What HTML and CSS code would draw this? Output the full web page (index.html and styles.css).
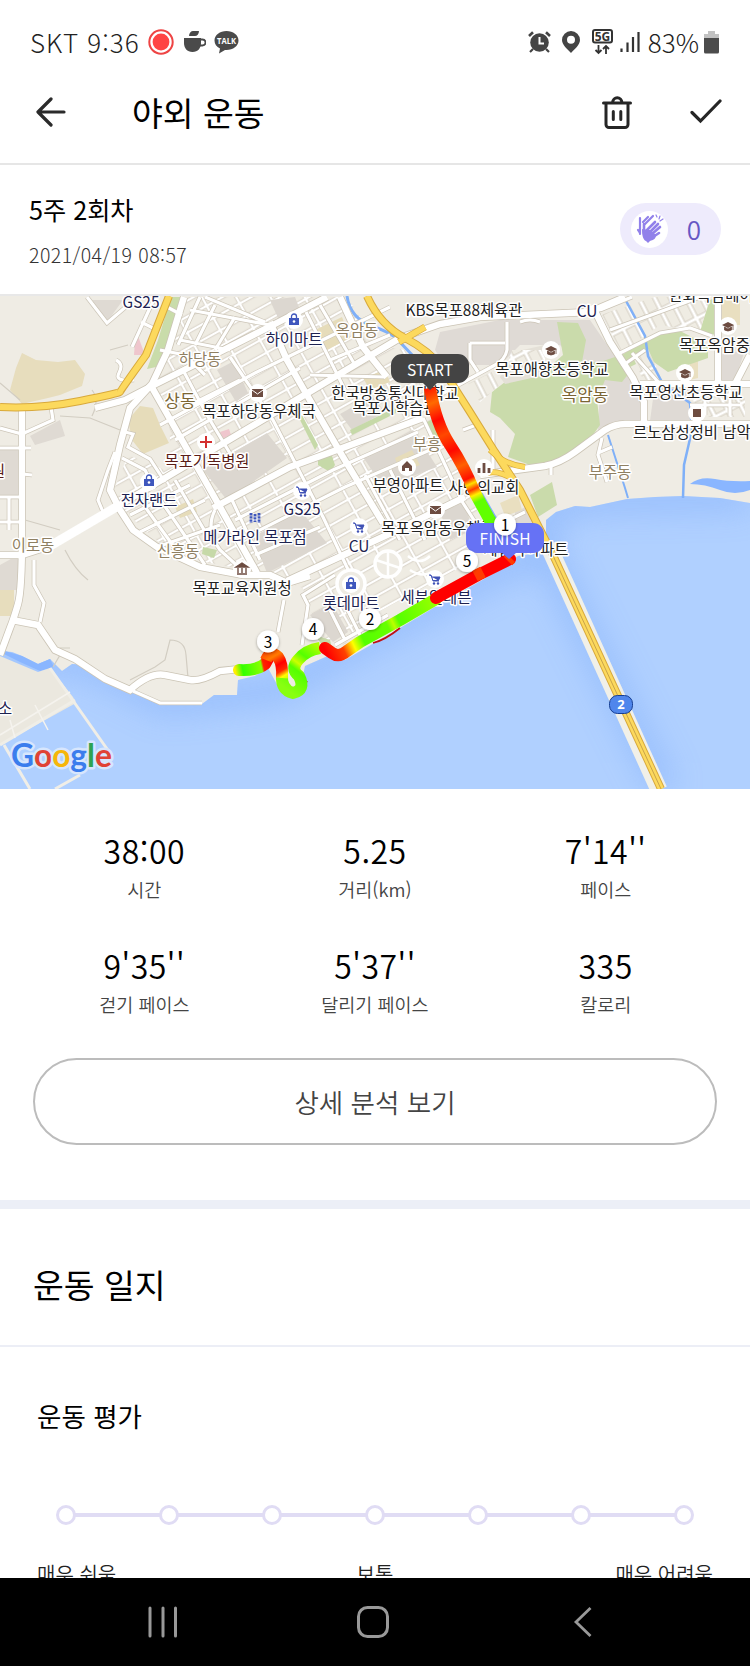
FILE: index.html
```html
<!DOCTYPE html>
<html lang="ko">
<head>
    <meta charset="UTF-8">
    <meta name="viewport" content="width=device-width, initial-scale=1.0">
    <title>야외 운동</title>
    <link rel="stylesheet" href="styles.css">
</head>
<body>
    <div class="status-bar">
        <div class="status-left">
            <span class="status-text carrier">SKT 9:36</span>
            <svg class="icon-record" width="26" height="26" viewBox="0 0 26 26">
                <circle cx="13" cy="13" r="11.7" fill="none" stroke="#ee4444" stroke-width="2"/>
                <circle cx="13" cy="13" r="8.4" fill="#ff4444"/>
            </svg>
            <svg class="icon-cup" width="22" height="22" viewBox="0 0 22 22">
                <path d="M5 5c0-3 2-5 4-5h6c0 3-2 5-4 5z" fill="#4a4a4a"/>
                <path d="M0 7h17v5c0 5-3 9-8.500 9S0 17 0 12z" fill="#4a4a4a"/>
                <path d="M16 8.500h2.500a2.200 2.200 0 0 1 0 6H16" fill="none" stroke="#4a4a4a" stroke-width="1.800"/>
            </svg>
            <svg class="icon-talk" width="25" height="24" viewBox="0 0 25 24">
                <path d="M12.500 1C19 1 24.500 5 24.500 10.500S19 20 12.500 20L11 19.900 5 23.500 6 18.500C2.500 17 .5 14 .5 10.500.5 5 6 1 12.500 1z" fill="#4a4a4a"/>
                <text x="12.500" y="13.700" text-anchor="middle" class="talk-text" textLength="19" lengthAdjust="spacingAndGlyphs">TALK</text>
            </svg>
        </div>
        <div class="status-right">
            <svg width="23" height="22" viewBox="0 0 23 22">
                <circle cx="11.500" cy="11.500" r="9.300" fill="#444"/>
                <path d="M1 5l4-3.800M22 5l-4-3.800" stroke="#444" stroke-width="2.600"/>
                <path d="M5 18l-3 3M18 18l3 3" stroke="#444" stroke-width="2.200"/>
                <path d="M11.500 6v6.500H16" fill="none" stroke="#fff" stroke-width="2"/>
            </svg>
            <svg class="icon-pin" width="18" height="22" viewBox="0 0 18 22">
                <path d="M9 0a9 9 0 0 1 9 9c0 5-5.500 9-9 13C5.500 18 0 14 0 9a9 9 0 0 1 9-9zm0 4.700a4 4 0 1 0 0 8 4 4 0 0 0 0-8z" fill="#444" fill-rule="evenodd"/>
            </svg>
            <svg class="icon-5g" width="21" height="26" viewBox="0 0 21 26">
                <rect x="1" y="1" width="19" height="12.500" rx="2" fill="#fff" stroke="#333" stroke-width="2"/>
                <text x="10.500" y="12" text-anchor="middle" class="net-text">5G</text>
                <path d="M6.500 16v8M3.500 21l3 3 3-3M14 25v-8M11 20l3-3 3 3" fill="none" stroke="#333" stroke-width="1.800"/>
            </svg>
            <svg class="icon-signal" width="20" height="22" viewBox="0 0 20 22">
                <path d="M1.500 17.500V21M7.500 11.500V21M13 6v15M18.500 1v20" stroke="#333" stroke-width="2.200" fill="none"/>
            </svg>
            <span class="status-text">83%</span>
            <svg class="icon-battery" width="15" height="23" viewBox="0 0 15 23">
                <path d="M4 0h7v3h4v4H0V3h4z" fill="#c2c2c2"/>
                <path d="M0 7h15v14a1.500 1.500 0 0 1-1.500 1.500h-12A1.500 1.500 0 0 1 0 21z" fill="#4c4c4c"/>
            </svg>
        </div>
    </div>

    <header class="header">
        <svg class="btn-back" width="30" height="30" viewBox="0 0 30 30">
            <path d="M15 2L2 15l13 13M2.500 15H28" fill="none" stroke="#2b2b2b" stroke-width="3.200" stroke-linecap="round" stroke-linejoin="round"/>
        </svg>
        <h1>야외 운동</h1>
        <svg class="btn-delete" width="32" height="36" viewBox="0 0 32 36">
            <path d="M2.500 9h27M5 9v21.500a3 3 0 0 0 3 3h16a3 3 0 0 0 3-3V9M11.500 8.500a4.800 5.500 0 0 1 9.500 0" fill="none" stroke="#262626" stroke-width="3" stroke-linecap="round"/>
            <path d="M12.300 17.500v8M19.800 17.500v8" stroke="#262626" stroke-width="3" stroke-linecap="round"/>
        </svg>
        <svg class="btn-done" width="32" height="26" viewBox="0 0 32 26">
            <path d="M2 13.500l8.500 8.500L30 2" fill="none" stroke="#262626" stroke-width="3.200" stroke-linecap="round"/>
        </svg>
    </header>

    <main class="content">
        <section class="summary">
            <div>
                <h2>5주 2회차</h2>
                <p class="date">2021/04/19 08:57</p>
            </div>
            <div class="clap">
                <span class="clap-icon">
                    <svg width="30" height="30" viewBox="0 0 30 30">
                        <g fill="none" stroke="#9181ea" stroke-linecap="round">
                            <path d="M5 20V4M3 16l2 3M8 8l5-5M12 8l5-5M10 10l8-8" stroke-width="2.200"/>
                            <path d="M9 20V10M11 17l9-9M14 19l9-9M17 20l8-7M18 23l6-4" stroke-width="2.600"/>
                            <path d="M21 1l1 2M25 2l-1 3M28 5l-3 2" stroke-width="1.200"/>
                        </g>
                        <path d="M7 15l4 1 4 0 6 5c0 4-3 5-6 6l-2 2-2-2c-3-1-4-6-4-12z" fill="#9181ea"/>
                    </svg>
                </span>
                <span class="clap-count">0</span>
            </div>
        </section>

        <svg class="map" width="750" height="493" viewBox="0 296 750 493">
            <defs>
                <linearGradient id="run1" gradientUnits="userSpaceOnUse" x1="430" y1="388" x2="490" y2="522">
                    <stop offset="0" stop-color="#ff1a00"/><stop offset=".1" stop-color="#ff6a00"/>
                    <stop offset=".22" stop-color="#ff0800"/><stop offset=".33" stop-color="#ff4800"/>
                    <stop offset=".45" stop-color="#ff0800"/><stop offset=".57" stop-color="#ff6000"/>
                    <stop offset=".67" stop-color="#ff1000"/><stop offset=".71" stop-color="#ffe000"/>
                    <stop offset=".75" stop-color="#ff3a00"/><stop offset=".79" stop-color="#fff000"/>
                    <stop offset=".84" stop-color="#60ff00"/><stop offset="1" stop-color="#60ff00"/>
                </linearGradient>
                <linearGradient id="run2" gradientUnits="userSpaceOnUse" x1="325" y1="650" x2="435" y2="598">
                    <stop offset="0" stop-color="#f00"/><stop offset=".14" stop-color="#ff4000"/>
                    <stop offset=".23" stop-color="#ff0"/><stop offset=".32" stop-color="#5f0"/>
                    <stop offset=".55" stop-color="#6f0"/><stop offset=".6" stop-color="#bf0"/>
                    <stop offset=".65" stop-color="#5f0"/><stop offset="1" stop-color="#9f0"/>
                </linearGradient>
                <linearGradient id="run3" gradientUnits="userSpaceOnUse" x1="262" y1="650" x2="285" y2="690">
                    <stop offset="0" stop-color="#f30"/><stop offset=".25" stop-color="#ff7a00"/>
                    <stop offset=".45" stop-color="#f00"/><stop offset=".6" stop-color="#ff2a00"/>
                    <stop offset=".72" stop-color="#ff0"/><stop offset="1" stop-color="#6f0"/>
                </linearGradient>
                <linearGradient id="run4" gradientUnits="userSpaceOnUse" x1="235" y1="670" x2="272" y2="662">
                    <stop offset="0" stop-color="#fe0"/><stop offset=".2" stop-color="#3f0"/>
                    <stop offset=".7" stop-color="#8f0"/><stop offset=".76" stop-color="#f20"/><stop offset="1" stop-color="#f00"/>
                </linearGradient>
                <linearGradient id="run5" gradientUnits="userSpaceOnUse" x1="320" y1="648" x2="288" y2="690">
                    <stop offset="0" stop-color="#af0"/><stop offset=".3" stop-color="#5f0"/>
                    <stop offset=".48" stop-color="#cf0"/><stop offset=".6" stop-color="#5f0"/><stop offset="1" stop-color="#8f1"/>
                </linearGradient>
                <filter id="soft" x="-20%" y="-20%" width="140%" height="140%"><feGaussianBlur stdDeviation="15"/></filter>
                <filter id="shadow" x="-40%" y="-40%" width="180%" height="180%"><feDropShadow dx="0" dy="1" stdDeviation="1.500" flood-opacity=".35"/></filter>
                <!-- small street blocks -->
                <pattern id="blocks" width="30" height="14" patternUnits="userSpaceOnUse" patternTransform="translate(4 2) rotate(-29)">
                    <rect width="30" height="14" fill="#fff"/>
                    <rect x="1.700" y="1.700" width="26.600" height="10.600" fill="#efece3" stroke="#d3ccbf" stroke-width=".8"/>
                </pattern>
                <pattern id="blocks2" width="14" height="24" patternUnits="userSpaceOnUse" patternTransform="rotate(-27)">
                    <rect width="14" height="24" fill="#fff"/>
                    <rect x="2" y="2" width="10" height="20" fill="#efece3" stroke="#cfc8ba" stroke-width=".9"/>
                </pattern>
                <clipPath id="seaClip"><path id="seaShape" d="M0 651L12 652 22 656 38 664 50 659 62 671 72 664 90 665 115 684 140 694 165 703 202 704 214 695 237 695 238 680 255 676 268 668 280 690 300 690 305 666 330 655 345 660 400 628 440 604 500 570 518 556 546 552 546 520 556 512 575 506 590 507 627 499 655 497 683 496 720 498 750 503V790H0z"/></clipPath>
                <g id="major" fill="none">
                    <path d="M22 407V535Q22 590 18 604T10 628L0 655"/>
                    <path d="M0 555H22L50 546 118 506 207 453 400 338 440 324 480 317 590 312 625 297"/>
                    <path d="M95 408L125 400 152 386 190 367 273 325 327 297"/>
                    <path d="M150 384L220 507 257 573"/>
                    <path d="M184 297L168 350 152 384 130 408 120 445 110 490 120 510 133 530 157 547 200 567 243 575H270L287 583 310 576"/>
                    <path d="M270 322L287 360 300 383 343 457 383 523"/>
                    <path d="M340 297L363 347 387 377"/>
                    <path d="M213 508L290 467 345 447 423 418"/>
                    <path d="M287 581L387 535 465 497"/>
                    <path d="M480 475L545 466Q560 463 575 452L605 430Q615 424 625 424H750"/>
                    <path d="M592 305L610 342 633 378 644 402V422M640 384H750M718 384V297M735 384L750 355"/>
                    <path d="M12 620L38 625 55 650 75 659 105 679 130 690Q150 672 165 675T190 680 220 671L240 669"/>
                </g>
                <g id="minor" fill="none">
                    <path d="M87 297L107 323 128 305M155 297L132 347M141 322L157 330M167 307L182 315"/>
                    <path d="M116 360Q124 364 119 373T134 380M51 407L53 420 22 434 0 428M0 448H31M22 474L32 475M0 497H22M9 497V530M0 522H22"/>
                    <path d="M115 452L108 470 98 500 103 512M125 432L133 434 128 447 150 459 165 482M122 458L145 470 150 480"/>
                    <path d="M34 560V585L44 603 40 622M133 691L160 703H202"/>
                    <path d="M230 357L273 420 323 517 353 580M183 370L207 415 240 470M160 350L185 355 205 375"/>
                    <path d="M284 600L278 632M302 645L308 605 303 595 335 575M330 610L345 640M335 645L388 615M345 605L360 635"/>
                    <path d="M240 540L345 487 430 450M235 520L333 470 418 432M255 555L320 527M160 425L255 373 390 307M175 440L300 368M190 405L240 380"/>
                    <path d="M423 418L463 503 490 545M390 470L425 540M365 475L400 540M330 360L390 335M310 375L385 377M306 312L345 390M320 305L355 365"/>
                    <path d="M215 510Q205 530 220 550L245 573M232 500L260 560M140 500L180 555M155 492L205 565M175 480L210 540M130 515L190 485M140 532L205 500M160 546L220 525"/>
                    <path d="M190 310L270 325M205 297L265 322M200 297L178 345M215 305L195 345M235 317L215 350M180 340L230 350"/>
                    <path d="M507 322V350Q505 360 495 365L440 395M470 343H505M470 343V360L478 372"/>
                    <path d="M463 430L479 424M480 475L493 470V430M505 522L525 512"/>
                    <path d="M610 330L665 310 700 297M620 353L660 333 690 328 712 336M600 310L632 297M632 353L660 384M622 366L645 350M690 395H740M690 405H740M705 390V415M730 390V415"/>
                    <path d="M602 438L598 455 607 482M598 453L612 447M551 466V475M540 322Q530 318 520 322"/>
                </g>
                <g id="cart"><path d="M0 1h2l2 6h6M3 3h8l-1.500 3.500H4" fill="#3f51b5" stroke="#3f51b5"/><circle cx="5" cy="9.500" r="1.200" fill="#3f51b5"/><circle cx="9" cy="9.500" r="1.200" fill="#3f51b5"/></g>
                <g id="bag"><path d="M0 4h10v7H0z" fill="#3f57bd"/><path d="M2.500 5V2.500a2.500 2.500 0 0 1 5 0V5" fill="none" stroke="#3f57bd" stroke-width="1.300"/><circle cx="5" cy="7.500" r="1.300" fill="#fff"/></g>
                <g id="cap"><path d="M0 4l6-3 6 3-6 3z" fill="#6d4c41"/><path d="M2.500 6v3q3.500 2 7 0V6L6 8zM11 4v5" fill="#6d4c41" stroke="#6d4c41" stroke-width=".8"/></g>
                <g id="mail"><path d="M0 0h11v8H0z" fill="#6d4c41"/><path d="M0 1l5.500 4L11 1" fill="none" stroke="#fff"/></g>
            </defs>

            <rect y="296" width="750" height="493" fill="#efece4"/>

            <!-- built-up, sand and park areas -->
            <path d="M0 449H19V495H0zM0 565L18 555V590H0zM30 436L60 420 65 436 35 445zM92 300H123L107 322z" fill="#dfdad3"/>
            <path d="M440 332L500 320H590L612 352 632 382 643 402V421H622L598 432 600 385 560 345 520 345 500 365H470L450 372 435 350zM655 384H690V421H650zM718 355L745 350 735 380H718zM515 512L530 505 540 535H515z" fill="#dfdad5"/>
            <path d="M0 590V616L14 616V590zM22 353L36 360 58 362 75 360 85 374 82 386 60 395 48 398 22 404 10 390 16 368z" fill="#e7ddbd"/>
            <path d="M718 300H740V325H718zM500 503L518 495 522 510 505 516zM690 358L698 355V378L690 380z" fill="#e9dfc0"/>
            <path d="M171 297H182L165 350 156 367 147 369 158 340z" fill="#c9dcaa"/>
            <path d="M135 341L138 336 145 355 134 355z" fill="#efc6cd"/>
            <path d="M557 322L578 323 586 340 582 362 600 362 615 357 630 372 622 382 605 380 597 400 600 425 588 442 565 461 530 465 508 457 515 434 500 418 490 412 492 392 505 382 540 375 563 355z" fill="#cadbab"/>
            <path d="M622 355L650 336 680 331 708 345V358L668 372 648 358 628 368zM700 330L710 300 718 297V336zM530 495L552 482 557 505 538 517z" fill="#cadbab"/>
            <path d="M500 377L514 358 518 351 545 345V375L505 384z" fill="#e4e0d7"/>
            <path d="M468 384L492 372 500 385 480 402z" fill="url(#blocks2)"/>
            <path d="M512 350H545V362H508z" fill="url(#blocks2)"/>

            <!-- town street grid -->
            <path d="M186 297H347L378 345 405 350 430 405 468 490 490 540 456 570 360 622 345 645 325 640 305 600 303 588 258 572 205 562 162 545 125 512 114 490 128 455 165 470 170 440 168 400 150 388 165 360z" fill="url(#blocks)"/>
            <path d="M600 315L655 297H710L700 332 660 325 622 352zM632 355L648 349 662 380 645 384zM690 392H745V417H700z" fill="url(#blocks2)"/>
            <path d="M217 370L234 361 248 393 236 402zM203 470L267 433 287 458 227 500zM253 537L300 510 327 543 267 573zM363 457L413 430 437 467 383 487zM340 414L372 396 385 412 352 430zM310 615L332 603 348 632 333 642zM270 300L295 297 300 310 278 318zM440 512L465 502 472 530 450 540z" fill="#dcd7d0"/>
            <path d="M315 330L342 317 350 338 327 350zM363 378L385 370 390 382 370 390zM395 458L412 450 420 465 400 473zM175 507L193 499 197 512 180 518zM128 420L140 406 153 408 160 425 169 443 143 454 132 440z" fill="#e6dcba"/>
            <path d="M350 430L395 408 398 412 352 435zM302 415L318 445 315 450 299 418zM318 455L330 450 335 465 330 472 318 465zM425 423L435 418 440 440 430 440zM203 547L217 550 214 558 202 554zM315 635L330 640 332 648 322 645z" fill="#c6d9a8"/>
            <path d="M220 432L229 429 231 435 222 439z" fill="#efc6cd"/>

            <!-- sea -->
            <use href="#seaShape" fill="#b0d0ff"/>
            <g clip-path="url(#seaClip)">
                <path d="M0 651L90 665 165 703 237 695 280 690 330 660 500 570 546 552 546 510 590 500 750 497M540 540L665 790" fill="none" stroke="#8bb5fb" stroke-width="24" opacity=".7" filter="url(#soft)"/>
            </g>
            <path d="M5 651L22 656 38 664 50 659 54 667 40 671 20 662 4 654z" fill="#8ab6ff"/>
            <path d="M0 656L38 672 50 668 73 697 76 703 0 745z" fill="#ebe8df"/>
            <path d="M50 668L112 756M0 745L75 700M4 745L30 789M55 789L80 775" fill="none" stroke="#f0eee7" stroke-width="3"/>
            <path d="M0 735L70 692M10 720L15 738M35 705L48 730" fill="none" stroke="#f5f3ee" stroke-width="1.500"/>
            <path d="M690 484Q700 476 715 479T750 481V490Q735 496 720 490T690 484z" fill="#8ab6ff"/>

            <g fill="none" stroke="#7fb0f8" stroke-width="3">
                <path d="M347 296Q350 318 372 326T398 340L415 358"/>
                <path d="M625 299L645 336 648 356 663 384 690 403 692 430 684 465 683 498" stroke-width="2.500"/>
                <path d="M481 492L500 525M608 435L625 488 628 498" stroke-width="2"/>
            </g>
            <path d="M53 667L60 655V648L70 648M130 680L155 667 165 660 170 640Q185 640 186 655L188 678M60 416L90 418 120 430M92 416Q100 400 92 390M65 550Q75 570 88 580M25 520L60 530M0 383L20 400M110 350L128 345" fill="none" stroke="#d2cdc2" stroke-width="1.200"/>

            <use href="#minor" stroke="#ccc5b7" stroke-width="4.600"/>
            <use href="#major" stroke="#cbc4b5" stroke-width="8"/>
            <use href="#minor" stroke="#fff" stroke-width="3.200"/>
            <use href="#major" stroke="#fff" stroke-width="6.400"/>
            <path d="M50 546L118 506" stroke="#fff" stroke-width="9"/>
            <g fill="#eeebe3" stroke="#fff" stroke-width="3.500">
                <circle cx="388" cy="564" r="13"/>
                <circle cx="351" cy="584" r="14"/>
                <path d="M388 551v26M376 560l24 8M408 556q12 10 22 0M410 570q12 8 22 2" fill="none" stroke-width="2.500"/>
            </g>

            <!-- bridge and national roads -->
            <path d="M548 545L659 790" fill="none" stroke="#f1f0e8" stroke-width="17"/>
            <g fill="none" stroke="#d8a93c" stroke-width="8">
                <path d="M0 407Q40 409 80 401T120 392 146 355L169 296"/>
                <path d="M367 296Q380 325 405 338T442 368L470 412 495 452 520 490 553 555 661 789"/>
                <path d="M399 342L425 327" stroke-width="7"/>
                <path d="M490 450Q505 465 525 467M482 474Q500 468 516 482" stroke-width="6"/>
            </g>
            <g fill="none" stroke="#fcd95d" stroke-width="6">
                <path d="M0 407Q40 409 80 401T120 392 146 355L169 296"/>
                <path d="M367 296Q380 325 405 338T442 368L470 412 495 452 520 490 553 555 661 789"/>
                <path d="M399 342L425 327" stroke-width="5.500"/>
                <path d="M490 450Q505 465 525 467M482 474Q500 468 516 482" stroke-width="4.500"/>
            </g>
            <path d="M549 547L661 789" fill="none" stroke="#c9a34a" stroke-width="1"/>

            <!-- place pins -->
            <g fill="#fff">
                <circle cx="206" cy="442" r="9"/><circle cx="149" cy="482" r="9"/><circle cx="258" cy="393" r="9"/>
                <circle cx="294" cy="320" r="9"/><circle cx="302" cy="491" r="9"/><circle cx="359" cy="527" r="9"/>
                <circle cx="407" cy="467" r="9"/><circle cx="436" cy="510" r="9"/><circle cx="484" cy="468" r="9"/>
                <circle cx="242" cy="569" r="9"/><circle cx="351" cy="584" r="9"/><circle cx="435" cy="579" r="9"/>
                <circle cx="551" cy="350" r="9"/><circle cx="728" cy="326" r="9"/><circle cx="685" cy="373" r="9"/><circle cx="697" cy="413" r="9"/>
            </g>
            <path d="M206 436v12M200 442h12" stroke="#d32f2f" stroke-width="2"/>
            <use href="#bag" x="144" y="475"/><use href="#bag" x="289" y="314"/><use href="#bag" x="346" y="578"/>
            <use href="#cart" x="296" y="486"/><use href="#cart" x="353" y="522"/><use href="#cart" x="429" y="574"/>
            <use href="#mail" x="252" y="389"/><use href="#mail" x="430" y="506"/>
            <use href="#cap" x="545" y="345"/><use href="#cap" x="722" y="321"/><use href="#cap" x="679" y="368"/>
            <rect x="693" y="409" width="8" height="8" fill="#6d4c41"/>
            <path d="M402 466l5-5 5 5v5h-3v-3h-4v3h-3z" fill="#6d4c41"/>
            <path d="M479 473v-5M484 473V463M489 473v-5" stroke="#6d4c41" stroke-width="2.800"/>
            <path d="M236 567l6-4 6 4zM237 574h10M238 568v5M242 568v5M246 568v5" fill="#6d4c41" stroke="#6d4c41" stroke-width="1.400"/>
            <path d="M251 513v10M255 514v8M259 513v10" stroke="#3f57bd" stroke-width="2.800" stroke-dasharray="2.400 .8"/>

            <g class="map-label">
                <text class="shop" x="141" y="308">GS25</text>
                <text class="shop" x="294" y="345">하이마트</text>
                <text x="464" y="316">KBS목포88체육관</text>
                <text class="shop" x="587" y="317">CU</text>
                <text x="711" y="301">한화옥암베이</text>
                <text x="259" y="417">목포하당동우체국</text>
                <text x="395" y="399">한국방송통신대학교</text>
                <text x="395" y="414">목포시학습관</text>
                <text x="552" y="375">목포애향초등학교</text>
                <text class="start" x="679" y="351">목포옥암중</text>
                <text x="686" y="398">목포영산초등학교</text>
                <text class="start" x="633" y="438">르노삼성정비 남악</text>
                <text class="medical" x="207" y="467">목포기독병원</text>
                <text class="medical" x="-2" y="477">원</text>
                <text class="shop" x="149" y="506">전자랜드</text>
                <text class="shop" x="302" y="515">GS25</text>
                <text x="408" y="491">부영아파트</text>
                <text x="484" y="493">사랑의교회</text>
                <text class="shop" x="255" y="543">메가라인 목포점</text>
                <text x="438" y="534">목포옥암동우체국</text>
                <text class="shop" x="359" y="552">CU</text>
                <text x="242" y="594">목포교육지원청</text>
                <text class="shop" x="351" y="609">롯데마트</text>
                <text class="shop" x="436" y="603">세븐일레븐</text>
                <text x="526" y="555">제일파아파트</text>
                <text class="shop" x="5" y="714">소</text>
                <text class="area" x="357" y="336">옥암동</text>
                <text class="area" x="200" y="365">하당동</text>
                <text class="area dark" x="180" y="407">상동</text>
                <text class="area dark" x="585" y="401">옥암동</text>
                <text class="area" x="427" y="450">부흥</text>
                <text class="area" x="610" y="478">부주동</text>
                <text class="area" x="33" y="551">이로동</text>
                <text class="area" x="178" y="557">신흥동</text>
            </g>

            <rect x="609.500" y="695.500" width="23" height="18" rx="8" fill="#4f86ec" stroke="#173f93"/>
            <text class="route-no" x="621" y="709">2</text>

            <!-- recorded run -->
            <path d="M373 643Q385 640 400 628M278 681Q284 695 295 695M301 690l6-9" fill="none" stroke="#c01010" stroke-width="1.800"/>
            <g fill="none" stroke-width="12" stroke-linejoin="round">
                <path d="M239 670Q256 671 265 664L270 655" stroke="url(#run4)" stroke-linecap="round"/>
                <path d="M320 648Q306 650 298 660 290 669 299 676 306 690 293 693 281 690 282 675" stroke="url(#run5)"/>
                <path d="M266 660Q270 650 278 657 283 664 282 678" stroke="url(#run3)"/>
                <path d="M325 648L332 653Q339 658 347 651L360 642 400 620 436 599" stroke="url(#run2)" stroke-linecap="round"/>
                <path d="M436 598L478 575 510 559" stroke="#f00" stroke-linecap="round"/>
                <path d="M475 576l8-4M508 561l3-3" stroke="#ff3c00"/>
                <path d="M430 388Q436 424 450 445T475 493L492 524" stroke="url(#run1)"/>
            </g>

            <path d="M402 354h56a11 11 0 0 1 11 11v7a11 11 0 0 1-11 11h-21l-7 7-7-7h-21a11 11 0 0 1-11-11v-7a11 11 0 0 1 11-11z" fill="#444"/>
            <text class="flag" x="430" y="375.500" textLength="46">START</text>
            <path d="M477 523h56a11 11 0 0 1 11 11v8a11 11 0 0 1-11 11h-17l-7 6-7-6h-25a11 11 0 0 1-11-11v-8a11 11 0 0 1 11-11z" fill="#6672f5"/>
            <text class="flag" x="505" y="545" textLength="51">FINISH</text>
            <g class="km-marker">
                <circle cx="505" cy="524.500" r="11"/><text x="505" y="530.500">1</text>
                <circle cx="467" cy="561" r="11"/><text x="467" y="567">5</text>
                <circle cx="370" cy="619" r="11"/><text x="370" y="625">2</text>
                <circle cx="313" cy="629" r="11"/><text x="313" y="635">4</text>
                <circle cx="268" cy="641.500" r="11"/><text x="268" y="647.500">3</text>
            </g>

            <text class="google" x="11" y="767" textLength="101" lengthAdjust="spacingAndGlyphs"><tspan fill="#3b7ded">G</tspan><tspan fill="#e04235">o</tspan><tspan fill="#f6b60a">o</tspan><tspan fill="#3b7ded">g</tspan><tspan fill="#2fa350">l</tspan><tspan fill="#e04235">e</tspan></text>
        </svg>

        <section class="stats">
            <div class="stat"><strong>38:00</strong><span>시간</span></div>
            <div class="stat"><strong>5.25</strong><span>거리(km)</span></div>
            <div class="stat"><strong>7'14''</strong><span>페이스</span></div>
            <div class="stat"><strong>9'35''</strong><span>걷기 페이스</span></div>
            <div class="stat"><strong>5'37''</strong><span>달리기 페이스</span></div>
            <div class="stat"><strong>335</strong><span>칼로리</span></div>
        </section>
        <button class="detail-button">상세 분석 보기</button>

        <section class="diary">
            <h2>운동 일지</h2>
            <h3>운동 평가</h3>
            <div class="rating">
                <i></i><i></i><i></i><i></i><i></i><i></i><i></i>
            </div>
            <div class="rating-labels">
                <span>매우 쉬움</span>
                <span>보통</span>
                <span>매우 어려움</span>
            </div>
        </section>
    </main>

    <nav class="nav-bar">
        <svg width="30" height="32" viewBox="0 0 30 32">
            <path d="M2 2v28M15 2v28M27.500 2v28" stroke="#999" stroke-width="3" stroke-linecap="round"/>
        </svg>
        <svg class="nav-home" width="32" height="32" viewBox="0 0 32 32">
            <rect x="1.500" y="1.500" width="29" height="29" rx="9" fill="none" stroke="#999" stroke-width="3"/>
        </svg>
        <svg width="20" height="32" viewBox="0 0 20 32">
            <path d="M17.500 2L3 16l14.500 14" fill="none" stroke="#999" stroke-width="2.800"/>
        </svg>
    </nav>
</body>
</html>
```

FILE: styles.css
```css
* {
    box-sizing: border-box;
}
body {
    margin: 0;
    width: 750px;
    height: 1666px;
    overflow: hidden;
    display: flex;
    flex-direction: column;
    background-color: #fff;
    color: #000;
    font-family: "Noto Sans CJK KR", sans-serif;
}
h1, h2, h3, p {
    margin: 0;
    font-weight: 400;
}
svg {
    display: block;
    flex: none;
}

/* status bar */
.status-bar {
    height: 84px;
    padding: 0 31px 0 30px;
    display: flex;
    justify-content: space-between;
    align-items: center;
}
.status-left, .status-right {
    display: flex;
    align-items: center;
}
.status-text {
    font-size: 26px;
    font-weight: 300;
    line-height: 30px;
    color: #222;
}
.carrier {
    letter-spacing: 1px;
}
.icon-record {
    margin-left: 8px;
}
.icon-cup {
    margin-left: 10px;
}
.icon-talk {
    margin-left: 8px;
}
.talk-text {
    font: bold 9px "Open Sans", sans-serif;
    fill: #fff;
}
.net-text {
    font: bold 12px "Open Sans", sans-serif;
    fill: #333;
}
.icon-pin {
    margin-left: 11px;
}
.icon-5g {
    margin-left: 12px;
}
.icon-signal {
    margin: 0 8px 0 7px;
}
.icon-battery {
    margin-left: 5px;
}

/* header */
.header {
    height: 81px;
    padding: 0 28px 24px 36px;
    display: flex;
    align-items: center;
    border-bottom: 2px solid #e6e6e6;
}
.header h1 {
    margin-left: 66px;
    flex: 1;
    font-size: 33.500px;
    line-height: 50px;
}
.btn-done {
    margin-left: 57px;
}

.content {
    height: 1413px;
    overflow: hidden;
}
.summary {
    height: 131px;
    padding: 24px 29px 0;
    display: flex;
    justify-content: space-between;
    border-bottom: 2px solid #e8e8e8;
}
.summary h2 {
    font-size: 25.200px;
    line-height: 40px;
}
.date {
    margin-top: 11px;
    font-size: 19.500px;
    font-weight: 300;
    line-height: 30px;
    letter-spacing: .45px;
    color: #333;
}
.clap {
    width: 101px;
    height: 52px;
    margin-top: 14px;
    padding: 0 20px 0 11px;
    display: flex;
    align-items: center;
    justify-content: space-between;
    border-radius: 26px;
    background-color: #eeebfc;
}
.clap-icon {
    width: 37px;
    height: 37px;
    display: grid;
    place-items: center;
    border-radius: 50%;
    background-color: #fff;
}
.clap-count {
    font-size: 26px;
    font-weight: 350;
    line-height: 50px;
    color: #6657c4;
}

/* map */
.map-label text {
    font-size: 15.400px;
    text-anchor: middle;
    fill: #222;
    stroke: #fff;
    stroke-width: 3px;
    stroke-linejoin: round;
    paint-order: stroke;
}
.map-label .start {
    text-anchor: start;
}
.map-label .shop {
    fill: #1d2250;
}
.map-label .medical {
    fill: #5a1d18;
}
.map-label .area {
    fill: #8f8062;
}
.map-label .dark {
    font-size: 17px;
    fill: #7b6534;
}
.route-no {
    font: bold 13px "Open Sans", sans-serif;
    text-anchor: middle;
    fill: #fff;
}
.flag {
    font-size: 15.500px;
    text-anchor: middle;
    fill: #fff;
}
.km-marker circle {
    fill: #fff;
    filter: url(#shadow);
}
.km-marker text {
    font-size: 15.500px;
    text-anchor: middle;
}
.google {
    font: 700 33px Lato, sans-serif;
    stroke: #d7e6fd;
    stroke-width: 5px;
    stroke-linejoin: round;
    paint-order: stroke;
}

/* stats */
.stats {
    padding: 39px 29px 0;
    display: grid;
    grid-template-columns: repeat(3, 1fr);
    grid-auto-rows: 115px;
}
.stat {
    display: flex;
    flex-direction: column;
    align-items: center;
}
.stat strong {
    font-size: 32px;
    font-weight: 350;
    line-height: 44px;
    letter-spacing: .5px;
}
.stat span {
    margin-top: 3px;
    font-size: 18.500px;
    font-weight: 350;
    line-height: 28px;
    color: #444;
}
.detail-button {
    display: block;
    width: 684px;
    height: 87px;
    margin: 0 auto;
    padding: 0;
    border: 2px solid #bcbcbc;
    border-radius: 44px;
    background-color: #fff;
    font-family: inherit;
    font-size: 26.500px;
    font-weight: 350;
    color: #444;
}

/* diary */
.diary {
    margin-top: 55px;
    border-top: 9px solid #eceff7;
}
.diary h2 {
    height: 138px;
    padding-left: 33px;
    border-bottom: 2px solid #eceef6;
    font-size: 33.500px;
    line-height: 150px;
}
.diary h3 {
    padding: 44px 37px 0;
    font-size: 26.500px;
    line-height: 50px;
}
.rating {
    height: 20px;
    margin: 64px 56px 0;
    display: flex;
    justify-content: space-between;
    background: linear-gradient(#e0dcf4, #e0dcf4) center / 600px 4px no-repeat;
}
.rating i {
    width: 20px;
    height: 20px;
    border: 3px solid #e0dcf4;
    border-radius: 50%;
    background-color: #fff;
}
.rating-labels {
    margin-top: 34px;
    padding: 0 37px;
    display: grid;
    grid-template-columns: 1fr 1fr 1fr;
    font-size: 20px;
    font-weight: 350;
    line-height: 30px;
    text-align: center;
    color: #222;
}
.rating-labels span:first-child {
    text-align: left;
}
.rating-labels span:last-child {
    text-align: right;
}

.nav-bar {
    height: 88px;
    padding: 0 157px 0 148px;
    display: flex;
    justify-content: space-between;
    align-items: center;
    background-color: #000;
}
.nav-home {
    margin-right: 6px;
}
```
